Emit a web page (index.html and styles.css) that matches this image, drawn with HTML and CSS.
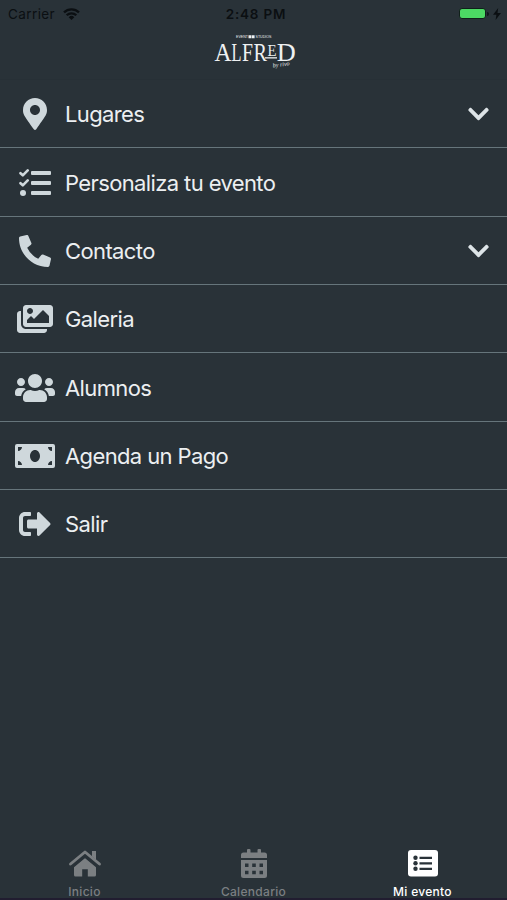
FILE: index.html
```
<!DOCTYPE html>
<html lang="es">
<head>
  <meta charset="utf-8">
  <title>Mi evento</title>
  <meta content="width=device-width, initial-scale=1" name="viewport" />
  <link rel="stylesheet" href="styles.css">
</head>
<body>
  <header>
    <div class="statusBar">
      <div class="carrier">
        <span>Carrier</span>
        <svg width="17" height="12" viewBox="0 0 17 12" fill="none" stroke="currentColor" stroke-width="2.3">
          <path d="M1 4.4a10.6 10.6 0 0 1 15 0M3.7 7.3a6.8 6.8 0 0 1 9.6 0"/>
          <path d="M8.5 12L5.7 9.2a4 4 0 0 1 5.6 0z" fill="currentColor" stroke="none"/>
        </svg>
      </div>
      <span class="time">2:48 PM</span>
      <div class="power">
        <span class="battery"></span>
        <span class="batteryTip"></span>
        <svg width="8" height="12" viewBox="0 0 8 12" fill="currentColor"><path d="M5.2 0L0 6.8h3.4L2.6 12 8 4.9H4.5z"/></svg>
      </div>
    </div>
    <svg class="logo" width="90" height="42" viewBox="0 0 90 42" fill="#eef1f2">
      <text class="logoTag" x="26" y="8.3" textLength="12" lengthAdjust="spacingAndGlyphs">EVENT</text>
      <path d="M38.500 5.300h2.800v3h-2.800zM41.800 5.300h2.800v3h-2.800z"/>
      <text class="logoTag" x="45.500" y="8.300" textLength="16" lengthAdjust="spacingAndGlyphs">STUDIOS</text>
      <text class="logoName" x="4.500" y="30.500" textLength="17" lengthAdjust="spacingAndGlyphs">A</text>
      <text class="logoName" x="21.500" y="30.500" textLength="10" lengthAdjust="spacingAndGlyphs">L</text>
      <text class="logoName" x="32" y="30.500" textLength="11" lengthAdjust="spacingAndGlyphs">F</text>
      <text class="logoName" x="43.500" y="30.500" textLength="13.500" lengthAdjust="spacingAndGlyphs">R</text>
      <text class="logoSmall" x="57.500" y="25.500" textLength="9" lengthAdjust="spacingAndGlyphs">E</text>
      <text class="logoName" x="66.800" y="30.500" textLength="19" lengthAdjust="spacingAndGlyphs">D</text>
      <path d="M55 27.200h12v1.300H55z"/>
      <text class="logoBy" x="63" y="37.500" transform="rotate(-8 63 37)">by rivo</text>
    </svg>
  </header>

  <main>
    <div class="item">
      <svg class="icon" width="24" height="32" viewBox="0 0 384 512"><path d="M172.268 501.670C26.970 291.031 0 269.413 0 192 0 85.961 85.961 0 192 0s192 85.961 192 192c0 77.413-26.970 99.031-172.268 309.670-9.535 13.774-29.930 13.773-39.464 0zM192 272c44.183 0 80-35.817 80-80s-35.817-80-80-80-80 35.817-80 80 35.817 80 80 80z"/></svg>
      <span>Lugares</span>
      <svg class="chevron" width="21" height="24" viewBox="0 0 448 512"><path d="M207.029 381.476L12.686 187.132c-9.373-9.373-9.373-24.569 0-33.941l22.667-22.667c9.357-9.357 24.522-9.375 33.901-.04L224 284.505l154.745-154.021c9.379-9.335 24.544-9.317 33.901.04l22.667 22.667c9.373 9.373 9.373 24.569 0 33.941L240.971 381.476c-9.373 9.372-24.569 9.372-33.942 0z"/></svg>
    </div>
    <div class="item">
      <svg class="icon" width="32" height="32" viewBox="0 0 32 32">
        <rect x="12" y="4" width="20" height="4" rx="1"/>
        <rect x="12" y="14" width="20" height="4" rx="1"/>
        <rect x="12" y="24" width="20" height="4" rx="1"/>
        <circle cx="4" cy="26" r="3"/>
        <path d="M1.500 6.200l2.300 2.100L8.700 3.400M1.500 16.200l2.300 2.100 4.900-4.900" fill="none" stroke="#cfd8dc" stroke-width="2.600" stroke-linecap="round" stroke-linejoin="round"/>
      </svg>
      <span>Personaliza tu evento</span>
    </div>
    <div class="item">
      <svg class="icon" width="32" height="32" viewBox="0 0 512 512"><path d="M497.390 361.800l-112-48a24 24 0 0 0-28 6.900l-49.600 60.600A370.660 370.660 0 0 1 130.600 204.110l60.600-49.600a23.940 23.940 0 0 0 6.900-28l-48-112A24.160 24.160 0 0 0 122.600.61l-104 24A24 24 0 0 0 0 48c0 256.500 207.900 464 464 464a24 24 0 0 0 23.400-18.600l24-104a24.290 24.290 0 0 0-14.010-27.600z"/></svg>
      <span>Contacto</span>
      <svg class="chevron" width="21" height="24" viewBox="0 0 448 512"><path d="M207.029 381.476L12.686 187.132c-9.373-9.373-9.373-24.569 0-33.941l22.667-22.667c9.357-9.357 24.522-9.375 33.901-.04L224 284.505l154.745-154.021c9.379-9.335 24.544-9.317 33.901.04l22.667 22.667c9.373 9.373 9.373 24.569 0 33.941L240.971 381.476c-9.373 9.372-24.569 9.372-33.942 0z"/></svg>
    </div>
    <div class="item">
      <svg class="icon" width="36" height="32" viewBox="0 0 576 512"><path d="M480 416v16c0 26.510-21.490 48-48 48H48c-26.510 0-48-21.490-48-48V176c0-26.510 21.490-48 48-48h16v208c0 44.112 35.888 80 80 80h336zm96-80V80c0-26.510-21.490-48-48-48H144c-26.510 0-48 21.490-48 48v256c0 26.510 21.490 48 48 48h384c26.510 0 48-21.490 48-48zM256 128c0 26.510-21.490 48-48 48s-48-21.490-48-48 21.490-48 48-48 48 21.490 48 48zm-96 144l55.515-55.515c4.686-4.686 12.284-4.686 16.971 0L272 256l135.515-135.515c4.686-4.686 12.284-4.686 16.971 0L512 208v112H160v-48z"/></svg>
      <span>Galeria</span>
    </div>
    <div class="item">
      <svg class="icon" width="40" height="32" viewBox="0 0 640 512"><path d="M96 224c35.300 0 64-28.700 64-64s-28.700-64-64-64-64 28.700-64 64 28.700 64 64 64zm448 0c35.300 0 64-28.700 64-64s-28.700-64-64-64-64 28.700-64 64 28.700 64 64 64zm32 32h-64c-17.600 0-33.500 7.100-45.100 18.600 40.300 22.100 68.900 62 75.100 109.400h66c17.700 0 32-14.300 32-32v-32c0-35.300-28.700-64-64-64zm-256 0c61.900 0 112-50.100 112-112S381.900 32 320 32 208 82.100 208 144s50.100 112 112 112zm76.800 32h-8.300c-20.800 10-43.900 16-68.500 16s-47.600-6-68.500-16h-8.300C179.600 288 128 339.600 128 403.200V432c0 26.500 21.500 48 48 48h288c26.500 0 48-21.500 48-48v-28.800c0-63.600-51.600-115.200-115.200-115.200zm-223.700-13.400C161.500 263.100 145.600 256 128 256H64c-35.300 0-64 28.700-64 64v32c0 17.700 14.300 32 32 32h65.900c6.300-47.400 34.900-87.300 75.200-109.400z"/></svg>
      <span>Alumnos</span>
    </div>
    <div class="item">
      <svg class="icon" width="40" height="32" viewBox="0 0 640 512"><path fill-rule="evenodd" d="M32 64h576q32 0 32 32v320q0 32-32 32H32q-32 0-32-32V96q0-32 32-32zM48 400h64c0-35.350-28.650-64-64-64zM48 176c35.350 0 64-28.650 64-64H48zM592 400v-64c-35.350 0-64 28.650-64 64zM592 176v-64h-64c0 35.350 28.650 64 64 64zM320 160c-44 0-80 43-80 96s36 96 80 96 80-43 80-96-36-96-80-96z"/></svg>
      <span>Agenda un Pago</span>
    </div>
    <div class="item">
      <svg class="icon" width="32" height="32" viewBox="0 0 512 512"><path d="M497 273L329 441c-15 15-41 4.500-41-17v-96H152c-13.300 0-24-10.700-24-24v-96c0-13.300 10.700-24 24-24h136V88c0-21.400 25.900-32 41-17l168 168c9.300 9.400 9.300 24.600 0 34zM192 436v-40c0-6.600-5.400-12-12-12H96c-17.700 0-32-14.300-32-32V160c0-17.700 14.300-32 32-32h84c6.600 0 12-5.400 12-12V76c0-6.600-5.400-12-12-12H96c-53 0-96 43-96 96v192c0 53 43 96 96 96h84c6.600 0 12-5.400 12-12z"/></svg>
      <span>Salir</span>
    </div>
  </main>

  <nav>
    <div class="tab">
      <svg width="34" height="30" viewBox="0 0 34 30" fill="currentColor">
        <path d="M17 8.500l11 9V26q0 1.500-1.500 1.500h-6.700v-7.300h-5.600v7.300H7.500Q6 27.500 6 26v-8.500z"/>
        <path d="M24 2h4v8.800l-4-3.400z"/>
        <path d="M17 8.200l11.500 9.500M17 8.200L5.500 17.700" stroke="#293238" stroke-width="1.500"/>
        <path d="M2.500 15L17 3l14.500 12" fill="none" stroke="currentColor" stroke-width="2.900" stroke-linecap="round" stroke-linejoin="round"/>
      </svg>
      <span>Inicio</span>
    </div>
    <div class="tab">
      <svg width="34" height="30" viewBox="0 0 34 30" fill="currentColor">
        <path d="M4 9V6q0-2.500 2.500-2.500H10V1Q10 0 11 0h1.500q1 0 1 1v2.500h7V1q0-1 1-1H23q1 0 1 1v2.500h3.500Q30 3.500 30 6v3z"/>
        <path fill-rule="evenodd" d="M4 11h26v15.500q0 2.500-2.500 2.500h-21Q4 29 4 26.500zM8 14.500V18h3.500v-3.500zm7.200 0V18h3.600v-3.500zm7.300 0V18H26v-3.500zM8 21.700v3.500h3.500v-3.500zm7.200 0v3.500h3.600v-3.500zm7.300 0v3.500H26v-3.500z"/>
      </svg>
      <span>Calendario</span>
    </div>
    <div class="tab active">
      <svg width="34" height="30" viewBox="0 0 34 30" fill="currentColor">
        <rect x="2" y="1" width="30" height="26.500" rx="3"/>
        <g fill="#293238">
          <circle cx="9.500" cy="8.800" r="2.200"/>
          <circle cx="9.500" cy="14.300" r="2.200"/>
          <circle cx="9.500" cy="19.800" r="2.200"/>
          <path d="M13.500 7.700H26v2.200H13.500zM13.500 13.200H26v2.200H13.500zM13.500 18.700H26v2.200H13.500z"/>
        </g>
      </svg>
      <span>Mi evento</span>
    </div>
  </nav>
</body>
</html>
```
FILE: styles.css
```
body {
  display: flex;
  flex-direction: column;
  height: 900px;
  margin: 0;
  overflow: hidden;
  box-sizing: border-box;
  background-color: #293238;
  border-bottom: 2px solid #211d30;
  font-family: Inter, "Liberation Sans", sans-serif;
  color: #eceff1;
}
header {
  height: 80px;
  box-sizing: border-box;
  border-bottom: 1px solid #273036;
}
.statusBar {
  display: grid;
  grid-template-columns: 1fr auto 1fr;
  align-items: center;
  height: 27px;
  padding: 0 6px 0 8px;
  font-size: 13.5px;
  color: #0b0f12;
}
.carrier, .power {
  display: flex;
  align-items: center;
}
.carrier {
  gap: 8px;
  letter-spacing: 0.4px;
}
.time {
  font-weight: 600;
  letter-spacing: 0.8px;
  margin-left: 3px;
}
.power {
  justify-content: flex-end;
}
.battery {
  width: 25px;
  height: 9px;
  border: 1px solid #10201a;
  border-radius: 3px;
  background-color: #4cd964;
}
.batteryTip {
  width: 2px;
  height: 4px;
  margin: 0 4px 0 1px;
  border-radius: 0 2px 2px 0;
  background-color: #10171a;
}
.logo {
  display: block;
  margin: 3px 0 0 210px;
}
.logoName {
  font: 25px "Liberation Serif", serif;
}
.logoSmall {
  font: 16px "Liberation Serif", serif;
}
.logoTag {
  font: 3.5px "Liberation Sans", sans-serif;
}
.logoBy {
  font: italic 6px "Liberation Serif", serif;
}
main {
  flex: 1;
}
.item {
  display: grid;
  grid-template-columns: 40px 1fr 21px;
  column-gap: 10px;
  align-items: center;
  height: 68.35px;
  padding: 1px 18px 0 15px;
  box-sizing: border-box;
  border-bottom: 1.5px solid #66757b;
  font-size: 22px;
  letter-spacing: -0.62px;
}
.icon {
  justify-self: center;
  fill: #cfd8dc;
}
.chevron {
  fill: #dde4e7;
}
nav {
  display: grid;
  grid-template-columns: repeat(3, 1fr);
  height: 49px;
}
.tab {
  display: flex;
  flex-direction: column;
  align-items: center;
  gap: 5px;
  font-size: 12px;
  font-weight: 500;
  line-height: 15px;
  letter-spacing: 0.3px;
  color: #7b7f82;
}
.active {
  color: #ffffff;
}
```
